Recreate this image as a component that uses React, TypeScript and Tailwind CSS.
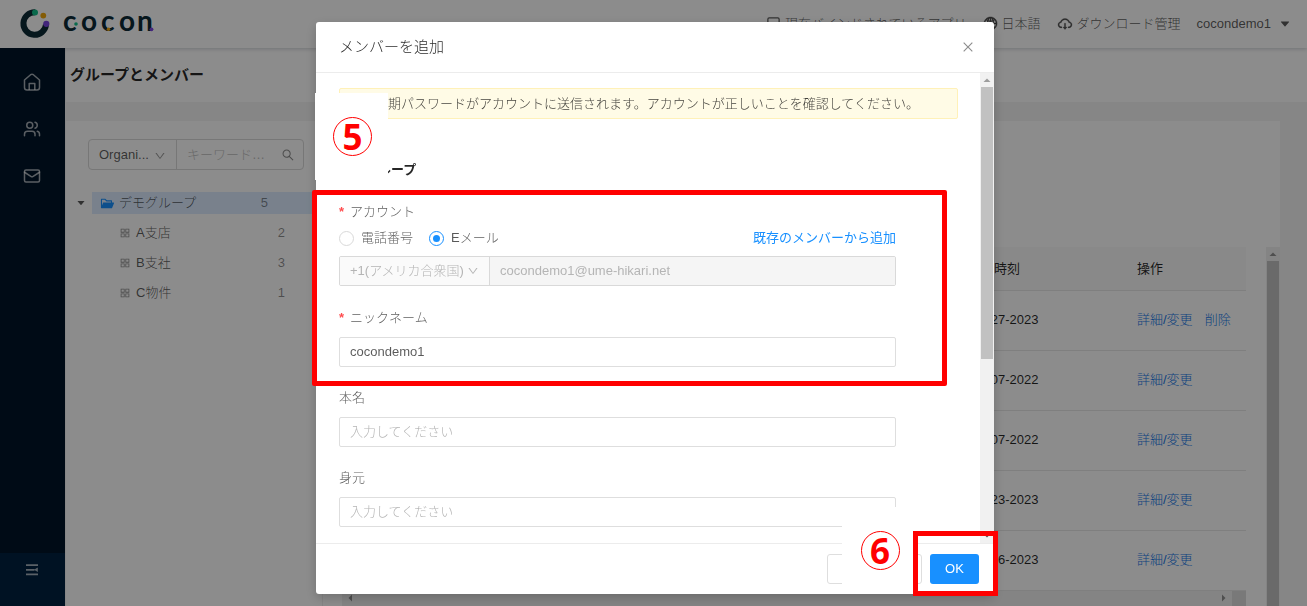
import { useState, type ReactNode } from "react";
import {
  AiFillCaretDown,
  AiFillFolderOpen,
  AiOutlineAppstore,
  AiOutlineClose,
  AiOutlineCloudDownload,
  AiOutlineDown,
  AiOutlineGlobal,
  AiOutlineSearch,
} from "react-icons/ai";
import { Mail, Square, Users } from "lucide-react";

const branches = [
  { name: "A支店", count: 2 },
  { name: "B支社", count: 3 },
  { name: "C物件", count: 1 },
];

const members = [
  { date: "04-27-2023", removable: true },
  { date: "12-07-2022", removable: false },
  { date: "12-07-2022", removable: false },
  { date: "02-23-2023", removable: false },
  { date: "03-16-2023", removable: false },
];

function Logo() {
  return (
    <svg width="140" height="48" viewBox="0 -6 140 48" role="img" aria-label="cocon">
      <path d="M15.2 6.2 A11.3 11.3 0 1 0 26 18.5" fill="none" stroke="#0c2a35" strokeWidth="6" />
      <circle cx="15" cy="6.4" r="3" fill="#12c08a" />
      <circle cx="23.3" cy="9.6" r="2.9" fill="#f0a80c" />
      <circle cx="26.3" cy="17.8" r="3.1" fill="#7a45e0" />
      <text
        x="43 61 81 99 117"
        y="25"
        fontSize="28"
        fontWeight="700"
        fill="#0c2a35"
        className="font-['Lato',sans-serif]"
      >
        cocon
      </text>
      <circle cx="56" cy="18" r="1.8" fill="#12c08a" />
      <circle cx="88.5" cy="23.3" r="1.8" fill="#f0a80c" />
      <circle cx="131.5" cy="23.3" r="1.9" fill="#7a45e0" />
    </svg>
  );
}

function HomeIcon() {
  return (
    <svg width="18" height="18" viewBox="0 0 18 18" fill="none" stroke="currentColor" strokeWidth="1.5" strokeLinejoin="round">
      <path d="M1.5 7 L7.6 1.7 Q9 0.7 10.4 1.7 L16.5 7 V14.5 Q16.5 17 14 17 H4 Q1.5 17 1.5 14.5 Z" />
      <path d="M6.2 17 V10.5 H11.8 V17" />
    </svg>
  );
}

function FoldIcon() {
  return (
    <svg width="12" height="12" viewBox="0 0 12 12" fill="none" stroke="currentColor" strokeWidth="1.8">
      <path d="M0 1.2 H12 M0 5.8 H8.5 M0 10.4 H12" />
      <path d="M8 5.8 L11.8 3.6 V8 Z" fill="currentColor" stroke="none" />
    </svg>
  );
}

function Arrow({ className }: { className: string }) {
  return (
    <svg width="8" height="8" viewBox="0 0 8 8" className={className} fill="currentColor">
      <path d="M0.5 6 L4 2.5 L7.5 6 Z" />
    </svg>
  );
}

function TopBar() {
  return (
    <header className="relative z-10 flex h-12 shrink-0 items-center justify-between bg-white pl-5 pr-4 shadow-[0_1px_4px_rgba(0,21,41,0.2)]">
      <Logo />
      <nav className="flex items-center gap-4 whitespace-nowrap pb-px text-black/65">
        <a href="#apps" className="flex items-center gap-1">
          <Square size={15} /> 現在バインドされているアプリ
        </a>
        <a href="#language" className="flex items-center gap-1">
          <AiOutlineGlobal size={15} strokeWidth={30} /> 日本語
        </a>
        <a href="#downloads" className="flex items-center gap-1">
          <AiOutlineCloudDownload size={16} strokeWidth={20} /> ダウンロード管理
        </a>
        <button type="button" className="flex items-center gap-2">
          cocondemo1 <AiFillCaretDown size={12} />
        </button>
      </nav>
    </header>
  );
}

function SideBar() {
  return (
    <aside className="flex w-[65px] shrink-0 flex-col justify-between bg-[#001529] text-white/65">
      <nav className="flex flex-col items-center gap-[29px] pr-0.5 pt-[25px]">
        <a href="#home" aria-label="ホーム">
          <HomeIcon />
        </a>
        <a href="#members" aria-label="メンバー">
          <Users size={18} />
        </a>
        <a href="#mail" aria-label="メール">
          <Mail size={18} />
        </a>
      </nav>
      <button type="button" aria-label="メニュー" className="flex h-[53px] justify-center bg-[#002140] pr-0.5 pt-[11px]">
        <FoldIcon />
      </button>
    </aside>
  );
}

function GroupTree() {
  return (
    <section className="w-[257px] shrink-0 border-r border-[#f0f0f0] pt-[18px] text-black/65">
      <div className="ml-[22px] mr-[18px] flex h-[31px] rounded-sm border border-[#d9d9d9]">
        <div className="relative w-[88px] shrink-0 border-r border-[#d9d9d9]">
          <select aria-label="種類" className="h-full w-full appearance-none pl-2.5">
            <option>Organi...</option>
          </select>
          <AiOutlineDown size={12} className="pointer-events-none absolute right-2.5 top-2.5 text-black/40" />
        </div>
        <input aria-label="検索" placeholder="キーワード…" className="min-w-0 flex-1 pl-2.5 placeholder:text-[#bfbfbf]" />
        <button type="button" aria-label="検索する" className="pr-2 text-black/45">
          <AiOutlineSearch size={14} />
        </button>
      </div>
      <ul className="mt-[18px] leading-[30px]">
        <li className="flex h-[30px] items-center">
          <AiFillCaretDown size={10} className="ml-2.5 mr-1.5" />
          <div className="flex h-[22px] flex-1 items-center bg-[#dcecff] pl-2 leading-[22px]">
            <AiFillFolderOpen size={15} className="mr-1 text-[#1890ff]" />
            デモグループ
            <span className="ml-auto pr-[54px] text-black/45">5</span>
          </div>
        </li>
        {branches.map((b) => (
          <li key={b.name} className="flex items-center pl-[53px] pr-[37px]">
            <AiOutlineAppstore size={12} className="mr-[5px] text-black/45" />
            {b.name}
            <span className="ml-auto text-black/45">{b.count}</span>
          </li>
        ))}
      </ul>
    </section>
  );
}

function MemberTable() {
  return (
    <section className="flex min-w-0 flex-1 pl-[19px] pt-[126px]">
      <div className="flex min-w-0 flex-1 flex-col">
        <table className="w-full table-fixed text-left">
          <thead>
            <tr className="h-[43px] border-b border-[#e8e8e8] bg-[#fafafa] text-black/85">
              <th className="pl-4 font-normal">ニックネーム</th>
              <th className="w-[169px] font-normal">作成時刻</th>
              <th className="w-[109px] font-normal">操作</th>
            </tr>
          </thead>
          <tbody>
            {members.map((m, i) => (
              <tr key={i} className="h-[60px] border-b border-[#e8e8e8] text-black/85">
                <td />
                <td className="pl-1">{m.date}</td>
                <td className="whitespace-nowrap text-[#1878e8]">
                  <a href="#edit">詳細/変更</a>
                  {m.removable && (
                    <a href="#delete" className="ml-3">
                      削除
                    </a>
                  )}
                </td>
              </tr>
            ))}
          </tbody>
        </table>
        <div className="flex h-[15px] items-center justify-between bg-[#f1f1f1] text-black/40">
          <Arrow className="ml-1 -rotate-90" />
          <div className="flex h-full items-center gap-1">
            <Arrow className="rotate-90" />
            <div className="h-full w-3.5 bg-[#dcdcdc]" />
          </div>
        </div>
      </div>
      <div className="ml-5 flex w-3.5 flex-col items-center bg-[#f1f1f1]">
        <Arrow className="my-[3px] shrink-0 text-black/40" />
        <div className="w-3 flex-1 bg-[#c1c1c1]" />
      </div>
    </section>
  );
}

const inputClass =
  "block h-[30px] w-full rounded-xs border border-[#dedede] bg-white px-2.5 pb-0.5 placeholder:text-[#b5b5b5]";

function Field({ id, label, required, children }: { id: string; label: string; required?: boolean; children: ReactNode }) {
  return (
    <div className="mb-5">
      <label htmlFor={id} className="mb-2 block leading-[22px]">
        {required && <span className="mr-1.5 font-bold text-[#ff4d4f]">*</span>}
        {label}
      </label>
      {children}
    </div>
  );
}

function Callout({ n, className }: { n: number; className: string }) {
  return (
    <div className={`absolute flex h-[87px] items-center justify-center bg-white ${className}`}>
      <span className="flex size-[39px] items-center justify-center rounded-full border border-[#f00] font-['Noto_Sans',sans-serif] text-[35px] font-bold leading-none text-[#f00]">
        {n}
      </span>
    </div>
  );
}

function AddMemberDialog() {
  const [kind, setKind] = useState<"phone" | "email">("email");
  const radioClass =
    "size-[15px] appearance-none rounded-full border border-[#d9d9d9] bg-clip-content p-[3px] checked:border-[#1890ff] checked:bg-[#1890ff]";

  return (
    <div className="fixed inset-0 z-20 flex justify-center bg-black/45 pb-3 pl-[3px] pt-[22px]">
      <div
        role="dialog"
        aria-label="メンバーを追加"
        className="relative flex w-[678px] flex-col rounded-[3px] bg-white shadow-[0_4px_12px_rgba(0,0,0,0.2)]"
      >
        <div className="flex h-[51px] shrink-0 items-center justify-between border-b border-[#ececec] pl-[23px] pr-[19px]">
          <h2 className="text-[15px] text-black/85">メンバーを追加</h2>
          <button type="button" aria-label="閉じる" className="text-black/45">
            <AiOutlineClose size={14} />
          </button>
        </div>

        <div className="flex min-h-0 flex-1">
          <form className="min-w-0 flex-1 overflow-hidden pl-[23px] pr-[84px] pt-[15px] text-black/65">
            <p className="-mr-[62px] mb-10 h-[31px] whitespace-nowrap rounded-xs border border-[#fff1b8] bg-[#fffbe6] pl-[35px] leading-[29px] text-black/75">
              初期パスワードがアカウントに送信されます。アカウントが正しいことを確認してください。
            </p>
            <h3 className="mb-5 font-bold leading-[22px] text-black/85">デモグループ</h3>

            <div className="mb-5">
              <label htmlFor="account" className="block leading-[22px]">
                <span className="mr-1.5 font-bold text-[#ff4d4f]">*</span>アカウント
              </label>
              <div className="mb-[3px] flex h-[30px] items-center gap-4">
                <label className="flex items-center gap-[7px]">
                  <input type="radio" name="kind" className={radioClass} checked={kind === "phone"} onChange={() => setKind("phone")} />
                  電話番号
                </label>
                <label className="flex items-center gap-[7px]">
                  <input type="radio" name="kind" className={radioClass} checked={kind === "email"} onChange={() => setKind("email")} />
                  Eメール
                </label>
                <a href="#existing" className="ml-auto font-normal text-[#1890ff]">
                  既存のメンバーから追加
                </a>
              </div>
              <div className="mb-[21px] flex h-[30px] overflow-hidden rounded-xs border border-[#d9d9d9] text-[#b5b5b5]">
                <div className="relative w-[150px] shrink-0 border-r border-[#d9d9d9] bg-[#fafafa]">
                  <select aria-label="国番号" disabled className="h-full w-full appearance-none pl-2.5 opacity-100">
                    <option>+1(アメリカ合衆国)</option>
                  </select>
                  <AiOutlineDown size={12} className="pointer-events-none absolute right-2.5 top-2" />
                </div>
                <input id="account" disabled value="cocondemo1@ume-hikari.net" className="min-w-0 flex-1 bg-[#f5f5f5] px-2.5" />
              </div>
            </div>

            <Field id="nickname" label="ニックネーム" required>
              <input id="nickname" defaultValue="cocondemo1" className={inputClass} />
            </Field>
            <Field id="realname" label="本名">
              <input id="realname" placeholder="入力してください" className={inputClass} />
            </Field>
            <Field id="identity" label="身元">
              <input id="identity" placeholder="入力してください" className={inputClass} />
            </Field>
          </form>
          <div className="flex w-3.5 shrink-0 flex-col items-center bg-[#f1f1f1]">
            <Arrow className="my-[3px] text-black/35" />
            <div className="h-[272px] w-3 bg-[#c1c1c1]" />
            <Arrow className="mb-[3px] mt-auto rotate-180 text-black/65" />
          </div>
        </div>

        <div className="flex h-[51px] shrink-0 items-center justify-end gap-2 border-t border-[#ececec] pr-[15px]">
          <button type="button" aria-label="キャンセル" className="h-[30px] w-[95px] rounded-[3px] border border-[#dedede]" />
          <button type="button" className="h-[30px] w-[49px] rounded-[3px] bg-[#1890ff] text-white">
            OK
          </button>
        </div>

        {/* Step markers on top of the dialog */}
        <Callout n={5} className="-left-px top-[71px] w-[73px] pl-0.5" />
        <Callout n={6} className="bottom-0 right-[76px] w-[76px]" />
        <div className="pointer-events-none absolute -left-1 right-[47px] top-[168px] h-[196px] rounded-xs border-5 border-[#f00]" />
        <div className="pointer-events-none absolute -bottom-0.5 -right-1 h-[65px] w-[85px] border-5 border-[#f00]" />
      </div>
    </div>
  );
}

export default function App() {
  return (
    <div className="flex h-screen flex-col overflow-hidden bg-[#f4f4f4] font-['Liberation_Sans','Noto_Sans_CJK_JP',sans-serif] text-[13px] font-light">
      <TopBar />
      <div className="flex min-h-0 flex-1">
        <SideBar />
        <main className="flex min-w-0 flex-1 flex-col pl-px">
          <div className="flex h-[54px] shrink-0 items-center bg-white pl-1">
            <h1 className="text-[15px] font-bold text-black/85">グループとメンバー</h1>
          </div>
          <div className="mr-[27px] mt-[19px] flex min-h-0 flex-1 overflow-hidden bg-white">
            <GroupTree />
            <MemberTable />
          </div>
        </main>
      </div>
      <AddMemberDialog />
    </div>
  );
}
